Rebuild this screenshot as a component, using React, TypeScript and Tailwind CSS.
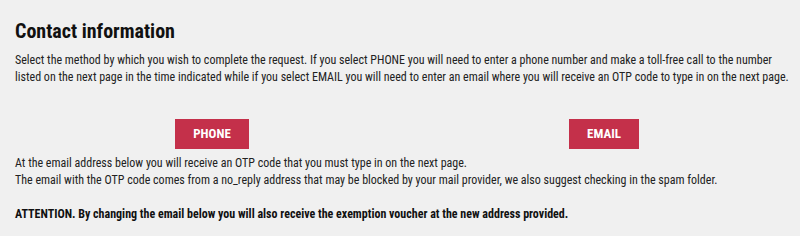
import React from "react";

export default function App() {
  return (
    <div className="h-[236px] w-full overflow-hidden bg-[#f0f0f0] font-[Roboto,sans-serif] font-stretch-condensed text-[#222222]">
      <div className="pl-[15px]">
        <h1 className="pt-[19px] text-[20px] font-bold leading-6 text-[#111111]">Contact information</h1>
        <p className="mt-[9px] text-[12px] leading-[17px]">
          Select the method by which you wish to complete the request. If you select PHONE you will need to enter a phone
          number and make a toll-free call to the number
          <br />
          listed on the next page in the time indicated while if you select EMAIL you will need to enter an email where you
          will receive an OTP code to type in on the next page.
        </p>
      </div>
      <div className="mt-[33px] grid grid-cols-2 justify-items-center pl-4">
        <button className="h-[30px] bg-[#c4304a] px-[18px] text-[13px] font-bold text-white">PHONE</button>
        <button className="h-[30px] bg-[#c4304a] px-[18px] text-[13px] font-bold text-white">EMAIL</button>
      </div>
      <div className="px-[15px]">
        <p className="mt-[6px] text-[12px] leading-[17px]">
          At the email address below you will receive an OTP code that you must type in on the next page.
          <br />
          The email with the OTP code comes from a no_reply address that may be blocked by your mail provider, we also
          suggest checking in the spam folder.
        </p>
        <p className="mt-[17px] text-[12px] font-bold leading-[17px] text-[#111111]">
          ATTENTION. By changing the email below you will also receive the exemption voucher at the new address provided.
        </p>
      </div>
    </div>
  );
}
